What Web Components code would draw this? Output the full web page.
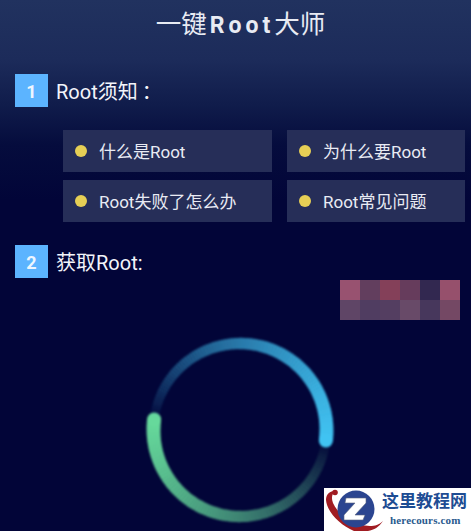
<!DOCTYPE html>
<html lang="zh">
<head>
<meta charset="utf-8">
<title>一键Root大师</title>
<style>
    html, body {
        margin: 0;
        height: 531px;
        overflow: hidden;
        background: #020538;
    }
    body {
        position: relative;
        font-family: Roboto, "Noto Sans CJK SC", sans-serif;
        color: #f2f4fa;
    }
    .colon { margin-left: 4px; }
</style>
</head>
<body>
<root-page>
    <title-bar>一键<b>Root</b>大师</title-bar>
    <step-heading num="1">Root须知<span class="colon">：</span></step-heading>
    <topic-grid>
        <topic-item>什么是Root</topic-item>
        <topic-item>为什么要Root</topic-item>
        <topic-item>Root失败了怎么办</topic-item>
        <topic-item>Root常见问题</topic-item>
    </topic-grid>
    <step-heading num="2">获取Root:</step-heading>
    <pixel-mosaic></pixel-mosaic>
    <progress-ring></progress-ring>
</root-page>
<site-mark></site-mark>

<script>
class RootPage extends HTMLElement {
    constructor() {
        super();
        this.attachShadow({ mode: 'open' });
        this.shadowRoot.innerHTML = `
            <style>
                :host {
                    display: flex;
                    flex-direction: column;
                    height: 531px;
                    background: linear-gradient(#21325f 0, #1c2b5a 60px, #101c4b 105px, #050c3d 145px, #020538 200px);
                }
            </style>
            <slot></slot>
        `;
    }
}

class TitleBar extends HTMLElement {
    constructor() {
        super();
        this.attachShadow({ mode: 'open' });
        this.shadowRoot.innerHTML = `
            <style>
                :host {
                    display: block;
                    height: 48px;
                    line-height: 49px;
                    padding-left: 10px;
                    text-align: center;
                    font-size: 25.5px;
                    color: #e8ebf3;
                }
                ::slotted(b) {
                    font-size: 23px;
                    font-weight: 700;
                    letter-spacing: 4px;
                    margin: 0 0 0 3px;
                }
            </style>
            <slot></slot>
        `;
    }
}

class StepHeading extends HTMLElement {
    constructor() {
        super();
        this.attachShadow({ mode: 'open' });
        this.shadowRoot.innerHTML = `
            <style>
                :host {
                    display: flex;
                    align-items: center;
                    gap: 8px;
                    height: 33px;
                    margin: 26px 0 0 15px;
                    font-size: 20px;
                }
                :host([num="2"]) { margin-top: 23px; }
                .num {
                    width: 33px;
                    height: 33px;
                    line-height: 36px;
                    background: #5cb4ff;
                    color: #eef6ff;
                    font-size: 18px;
                    font-weight: 700;
                    text-align: center;
                }
            </style>
            <div class="num">${this.getAttribute('num')}</div>
            <div><slot></slot></div>
        `;
    }
}

class TopicGrid extends HTMLElement {
    constructor() {
        super();
        this.attachShadow({ mode: 'open' });
        this.shadowRoot.innerHTML = `
            <style>
                :host {
                    display: grid;
                    grid-template-columns: 209px 178px;
                    grid-auto-rows: 42px;
                    column-gap: 15px;
                    row-gap: 8px;
                    margin: 23px 0 0 63px;
                }
            </style>
            <slot></slot>
        `;
    }
}

class TopicItem extends HTMLElement {
    constructor() {
        super();
        this.attachShadow({ mode: 'open' });
        this.shadowRoot.innerHTML = `
            <style>
                :host {
                    display: flex;
                    align-items: center;
                    gap: 12px;
                    padding-left: 12px;
                    background: #262e58;
                    font-size: 17px;
                    color: #e9ebf4;
                }
                .dot {
                    width: 12px;
                    height: 12px;
                    border-radius: 50%;
                    background: #e6cf55;
                }
                .label { margin-top: -2px; }
            </style>
            <div class="dot"></div>
            <div class="label"><slot></slot></div>
        `;
    }
}

class PixelMosaic extends HTMLElement {
    constructor() {
        super();
        this.attachShadow({ mode: 'open' });
        const cells = ['#985270', '#623e5e', '#844059', '#663c5c', '#322850', '#96506c',
                       '#5f4566', '#503d61', '#543e61', '#684a68', '#47375c', '#744864'];
        this.shadowRoot.innerHTML = `
            <style>
                :host {
                    display: grid;
                    grid-template-columns: repeat(6, 20px);
                    grid-auto-rows: 20px;
                    align-self: flex-end;
                    margin: 2px 11px 0 0;
                }
            </style>
            ${cells.map(c => `<div style="background:${c}"></div>`).join('')}
        `;
    }
}

class ProgressRing extends HTMLElement {
    constructor() {
        super();
        this.attachShadow({ mode: 'open' });
        const cx = 100, cy = 100, r = 86.5;
        const point = deg => {
            const a = deg * Math.PI / 180;
            return [cx + r * Math.cos(a), cy + r * Math.sin(a)].map(n => n.toFixed(2));
        };
        // both tails run counter-clockwise from the head and fade out (svg angles)
        const tail = (head, sweep, color, width, power) => {
            let out = '';
            for (let i = 0; i < sweep; i += 2) {
                const from = point(head - i), to = point(head - i - 2.6);
                const opacity = Math.pow(1 - i / sweep, power);
                const w = width - (width - 9) * (i / sweep);
                out += `<path d="M${from.join(' ')} A${r} ${r} 0 0 0 ${to.join(' ')}" stroke="${color}" stroke-opacity="${opacity.toFixed(3)}" stroke-width="${w.toFixed(1)}"/>`;
            }
            const cap = point(head);
            out += `<circle cx="${cap[0]}" cy="${cap[1]}" r="${width / 2}" fill="${color}"/>`;
            return out;
        };
        this.shadowRoot.innerHTML = `
            <style>
                :host {
                    display: block;
                    width: 200px;
                    height: 200px;
                    margin: 10px 0 0 139.5px;
                }
                svg { display: block; overflow: visible; }
            </style>
            <svg width="200" height="200" viewBox="0 0 200 200" fill="none">
                <defs><filter id="soft" x="-10%" y="-10%" width="120%" height="120%"><feGaussianBlur stdDeviation="0.8"/></filter></defs>
                <g filter="url(#soft)">
                    ${tail(187, 178, '#66d99b', 14, 0.85)}
                    ${tail(7, 178, '#41c3f2', 14, 0.8)}
                </g>
            </svg>
        `;
    }
}

class SiteMark extends HTMLElement {
    constructor() {
        super();
        this.attachShadow({ mode: 'open' });
        this.shadowRoot.innerHTML = `
            <style>
                :host {
                    position: absolute;
                    right: 0;
                    bottom: 0;
                    width: 147px;
                    height: 43px;
                    background: #fff;
                    overflow: hidden;
                    font-family: "Liberation Serif", "Noto Sans CJK SC", serif;
                    font-weight: 700;
                }
                svg { position: absolute; left: 0; top: 0; }
                .cn {
                    position: absolute;
                    left: 58px;
                    top: 2px;
                    font-size: 17px;
                    line-height: 23px;
                    color: #1d4c93;
                    white-space: nowrap;
                }
                .en {
                    position: absolute;
                    left: 66px;
                    top: 24px;
                    font-size: 11px;
                    line-height: 16px;
                    color: #2a5a8e;
                    letter-spacing: 0.15px;
                    white-space: nowrap;
                }
            </style>
            <svg width="66" height="43" viewBox="0 0 66 43">
                <path d="M2 12 C2 6 6 3 11 3 C8 6 7 10 9 15 C14 27 30 37 46 38 C51 38 55 37 59 33 C55 39 50 42 44 43 L30 43 C16 37 3 24 2 12 Z" fill="#a01c22"/>
                <circle cx="11" cy="4.5" r="2.8" fill="#a01c22"/>
                <circle cx="32" cy="21" r="18.5" fill="#2b4590"/>
                <path d="M22 10 H42 L42 15 L31 27 H41 L39 32 H20 L20 27 L31 15 H21 Z" fill="#fff" stroke="#5a6680" stroke-width="0.6"/>
            </svg>
            <div class="cn">这里教程网</div>
            <div class="en">herecours.com</div>
        `;
    }
}

customElements.define('root-page', RootPage);
customElements.define('title-bar', TitleBar);
customElements.define('step-heading', StepHeading);
customElements.define('topic-grid', TopicGrid);
customElements.define('topic-item', TopicItem);
customElements.define('pixel-mosaic', PixelMosaic);
customElements.define('progress-ring', ProgressRing);
customElements.define('site-mark', SiteMark);
</script>
</body>
</html>
